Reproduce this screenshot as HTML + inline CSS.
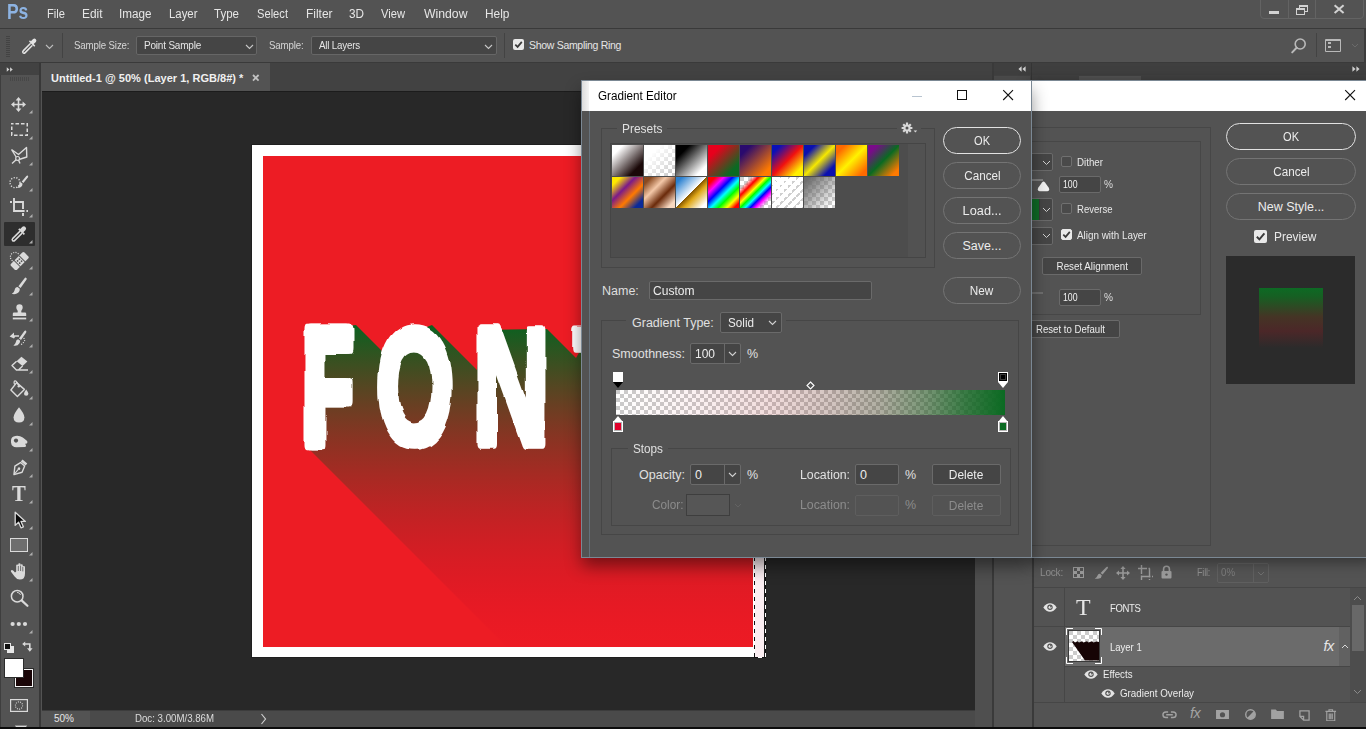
<!DOCTYPE html>
<html lang="en">
<head>
<meta charset="utf-8">
<title>Photoshop - Gradient Editor</title>
<style>
*{box-sizing:border-box;margin:0;padding:0}
html,body{width:1366px;height:729px;overflow:hidden;background:#535353}
body{font-family:"Liberation Sans","DejaVu Sans",sans-serif;font-size:12px;color:#dcdcdc;position:relative}
.abs,#app div,#app span,#app svg{position:absolute}
#app{position:absolute;left:0;top:0;width:1366px;height:729px;overflow:hidden;background:#535353}
.t{white-space:nowrap;line-height:1;transform-origin:0 0}
#app .c{position:static;display:inline-block;transform-origin:50% 50%;line-height:inherit}
/* ---------- menu ---------- */
#menubar{left:0;top:0;width:1366px;height:28px;background:#535353}
#menubar .t{top:8px;font-size:12.5px;color:#e6e6e6}
#optbar{left:0;top:28px;width:1366px;height:35px;background:#535353;border-top:1px solid #3a3a3a;border-bottom:1px solid #3a3a3a}
.sel{background:#454545;border:1px solid #666;border-radius:2px}
/* ---------- chrome ---------- */
#tabrow{left:41px;top:63px;width:951px;height:28px;background:#424242}
#tab{left:0;top:0;width:229px;height:28px;background:#535353}
#canvas{left:42px;top:91px;width:933px;height:619px;background:#282828;overflow:hidden}
#toolbar{left:0;top:63px;width:41px;height:666px;background:#535353}
#status{left:42px;top:710px;width:933px;height:18px;background:#535353}
/* ---------- dialog ---------- */
#ge{left:581px;top:80px;width:451px;height:478px;background:#535353;border:1px solid #7b8894;box-shadow:0 9px 16px -1px rgba(0,0,0,.46)}
.btn{border:1px solid #747474;border-radius:14px;height:27px;text-align:center;color:#ececec;font-size:12.5px;line-height:27px}
.grp{border:1px solid #464646}
.lbl{background:#535353;padding:0 4px;font-size:13.5px;color:#e0e0e0;line-height:14px;height:14px}
.cb{width:11px;height:11px;border:1px solid #707070;border-radius:2px;background:#4a4a4a}
.cb.on{background:#e9e9e9;border-color:#e9e9e9}
.sw{width:31px;height:31px}
.inp{background:#454545;border:1px solid #6a6a6a;border-radius:2px;color:#e6e6e6;font-size:12.5px}
</style>
</head>
<body>
<div id="app">

<!-- MENU BAR -->
<div id="menubar">
  <span class="t" style="left:7px;top:1.5px;font-size:21.5px;font-weight:bold;color:#8db3e2;letter-spacing:-0.3px;transform:scaleX(0.813)">Ps</span>
  <span class="t" style="left:47px;transform:scaleX(0.893)">File</span>
  <span class="t" style="left:82px;transform:scaleX(0.951)">Edit</span>
  <span class="t" style="left:119px;transform:scaleX(0.935)">Image</span>
  <span class="t" style="left:169px;transform:scaleX(0.911)">Layer</span>
  <span class="t" style="left:214px;transform:scaleX(0.922)">Type</span>
  <span class="t" style="left:257px;transform:scaleX(0.892)">Select</span>
  <span class="t" style="left:306px;transform:scaleX(0.954)">Filter</span>
  <span class="t" style="left:349px;transform:scaleX(0.938)">3D</span>
  <span class="t" style="left:381px;transform:scaleX(0.893)">View</span>
  <span class="t" style="left:424px;transform:scaleX(0.978)">Window</span>
  <span class="t" style="left:485px;transform:scaleX(0.953)">Help</span>
  <div style="left:1260px;top:-1px;width:104px;height:20px;border:1px solid #636363;border-radius:0 0 4px 4px"></div>
  <div style="left:1288px;top:0;width:1px;height:18px;background:#636363"></div>
  <div style="left:1315px;top:0;width:1px;height:18px;background:#636363"></div>
  <div style="left:1269px;top:10.5px;width:10px;height:3.5px;background:#d2d2d2"></div>
  <div style="left:1299px;top:5px;width:9px;height:7px;border:1.5px solid #d2d2d2;border-top-width:2px"></div>
  <div style="left:1296px;top:8px;width:9px;height:7px;border:1.5px solid #d2d2d2;border-top-width:2px;background:#535353"></div>
  <svg style="left:1333px;top:4px" width="13" height="11" viewBox="0 0 13 11"><path d="M1.6 1.2 L10.6 9 M10.6 1.2 L1.6 9" stroke="#d2d2d2" stroke-width="2"/></svg>
</div>

<!-- OPTIONS BAR -->
<div id="optbar">
  <div style="left:6px;top:7px;width:4px;height:21px;background:repeating-linear-gradient(to bottom,#434343 0 1px,transparent 1px 2px)"></div>
  <svg style="left:20px;top:8px" width="18" height="19" viewBox="0 0 18 19"><g fill="none" stroke="#e4e4e4" stroke-width="1.5" stroke-linecap="round" stroke-linejoin="round"><path d="M10.2 6.8 L3.4 13.6 Q2.2 14.8 3 15.8 Q4 16.8 5.2 15.6 L12 8.8"/></g><path d="M9 4.6 L14.2 9.8 L15.3 8.7 L13.7 7.1 L15.9 4.9 Q17 3.4 15.8 2.2 Q14.6 1 13.1 2.1 L10.9 4.3 L9.9 3.3 Z" fill="#e4e4e4"/></svg>
  <svg style="left:45px;top:15px" width="9" height="6" viewBox="0 0 9 6"><path d="M1 1 L4.5 4.5 L8 1" fill="none" stroke="#bdbdbd" stroke-width="1.1"/></svg>
  <div style="left:62px;top:4px;width:1px;height:25px;background:#434343"></div>
  <span class="t" style="left:74px;top:11px;font-size:10.5px;color:#d6d6d6;letter-spacing:-0.15px;transform:scaleX(0.922)">Sample Size:</span>
  <div class="sel" style="left:136px;top:7px;width:121px;height:19px"></div>
  <span class="t" style="left:144px;top:11px;font-size:10.5px;color:#e6e6e6;letter-spacing:-0.2px;transform:scaleX(0.951)">Point Sample</span>
  <svg style="left:245px;top:15px" width="9" height="6" viewBox="0 0 9 6"><path d="M1 1 L4.5 4.5 L8 1" fill="none" stroke="#c8c8c8" stroke-width="1.1"/></svg>
  <span class="t" style="left:269px;top:11px;font-size:10.5px;color:#d6d6d6;letter-spacing:-0.15px;transform:scaleX(0.920)">Sample:</span>
  <div class="sel" style="left:311px;top:7px;width:186px;height:19px"></div>
  <span class="t" style="left:319px;top:11px;font-size:10.5px;color:#e6e6e6;letter-spacing:-0.2px;transform:scaleX(0.930)">All Layers</span>
  <svg style="left:484px;top:15px" width="9" height="6" viewBox="0 0 9 6"><path d="M1 1 L4.5 4.5 L8 1" fill="none" stroke="#c8c8c8" stroke-width="1.1"/></svg>
  <div style="left:504px;top:4px;width:1px;height:25px;background:#434343"></div>
  <div style="left:513px;top:10px;width:11px;height:11px;background:#e9e9e9;border-radius:2px"></div>
  <svg style="left:513px;top:10px" width="11" height="11" viewBox="0 0 11 11"><path d="M2.3 5.6 L4.6 7.9 L8.8 2.9" fill="none" stroke="#3a3a3a" stroke-width="1.7"/></svg>
  <span class="t" style="left:529px;top:11px;font-size:10.5px;color:#e6e6e6;letter-spacing:-0.3px">Show Sampling Ring</span>
  <svg style="left:1290px;top:8px" width="18" height="18" viewBox="0 0 18 18"><circle cx="10.2" cy="7" r="5" fill="none" stroke="#b9b9b9" stroke-width="1.6"/><path d="M6.6 10.8 L2.2 15.4" stroke="#b9b9b9" stroke-width="2" stroke-linecap="round"/></svg>
  <div style="left:1316px;top:4px;width:1px;height:24px;background:#434343"></div>
  <div style="left:1325px;top:10px;width:16px;height:13px;border:1.5px solid #b9b9b9;border-top-width:2px;border-radius:1px"></div>
  <div style="left:1328px;top:13px;width:3px;height:2px;background:#b9b9b9"></div>
  <div style="left:1328px;top:17px;width:3px;height:2px;background:#b9b9b9"></div>
  <svg style="left:1351px;top:14px" width="8" height="5" viewBox="0 0 8 5"><path d="M1 1 L4 4 L7 1" fill="none" stroke="#6a6a6a" stroke-width="1"/></svg>
</div>

<!-- TAB ROW / CANVAS -->
<div id="tabrow">
  <div id="tab"></div>
  <span class="t" style="left:10px;top:10px;font-size:11px;font-weight:bold;color:#f0f0f0;letter-spacing:0.02px">Untitled-1 @ 50% (Layer 1, RGB/8#) *</span>
  <svg style="left:211px;top:10.5px" width="8" height="8" viewBox="0 0 8 8"><path d="M1 1 L6.6 6.6 M6.6 1 L1 6.6" stroke="#c2c2c2" stroke-width="1.8"/></svg>
</div>
<div id="canvas">
  <!-- document (coords relative to canvas: subtract 42,91) -->
  <div id="doc" style="left:210px;top:54px;width:512px;height:512px;background:#fff;box-shadow:0 0 0 1px #1f1f1f"></div>
  <div id="art" style="left:221px;top:65px;width:490px;height:491px;background:#ed1c24;overflow:hidden">
    <svg style="left:0;top:0" width="490" height="491" viewBox="263 156 490 491">
      <defs>
        <linearGradient id="lsg" gradientUnits="userSpaceOnUse" x1="0" y1="323" x2="0" y2="662">
      <stop offset="0.000" stop-color="rgb(8,98,32)" stop-opacity="1.000"/>
      <stop offset="0.083" stop-color="rgb(27,90,32)" stop-opacity="0.917"/>
      <stop offset="0.167" stop-color="rgb(45,82,33)" stop-opacity="0.833"/>
      <stop offset="0.250" stop-color="rgb(64,74,34)" stop-opacity="0.750"/>
      <stop offset="0.333" stop-color="rgb(83,65,34)" stop-opacity="0.667"/>
      <stop offset="0.417" stop-color="rgb(101,57,34)" stop-opacity="0.583"/>
      <stop offset="0.500" stop-color="rgb(120,49,35)" stop-opacity="0.500"/>
      <stop offset="0.583" stop-color="rgb(139,41,36)" stop-opacity="0.417"/>
      <stop offset="0.667" stop-color="rgb(157,33,36)" stop-opacity="0.333"/>
      <stop offset="0.750" stop-color="rgb(176,24,36)" stop-opacity="0.250"/>
      <stop offset="0.833" stop-color="rgb(195,16,37)" stop-opacity="0.167"/>
      <stop offset="0.917" stop-color="rgb(213,8,38)" stop-opacity="0.083"/>
      <stop offset="1.000" stop-color="rgb(232,0,38)" stop-opacity="0.000"/>
        </linearGradient>
        <filter id="rough" x="-5%" y="-5%" width="110%" height="110%">
          <feTurbulence type="fractalNoise" baseFrequency="0.035" numOctaves="2" seed="7" result="n"/>
          <feDisplacementMap in="SourceGraphic" in2="n" scale="6" xChannelSelector="R" yChannelSelector="G"/>
        </filter>
      </defs>
      <polygon fill="url(#lsg)" points="309,330 356,325 385,354 398,338 432,325 477,370 480,330 547,329 576,358 592,330 753,330 753,670 530,670 309,449"/>
      <g filter="url(#rough)" font-family="Liberation Sans, sans-serif" font-weight="bold" font-size="100" fill="#fff" stroke="#fff" stroke-width="8" stroke-linejoin="round">
        <text transform="translate(301.7,443.6) scale(0.772,1.672)" vector-effect="non-scaling-stroke">F</text><text transform="translate(304.2,443.6) scale(0.772,1.672)" vector-effect="non-scaling-stroke">F</text><text transform="translate(306.7,443.6) scale(0.772,1.672)" vector-effect="non-scaling-stroke">F</text>
        <text transform="translate(377,443.4) scale(0.976,1.632)" vector-effect="non-scaling-stroke">O</text>
        <text transform="translate(473.6,444) scale(1.052,1.672)" vector-effect="non-scaling-stroke">N</text>
        <text transform="translate(574,444) scale(1.0,1.672)" vector-effect="non-scaling-stroke">T</text>
        <text transform="translate(648,443.2) scale(1.0,1.662)" vector-effect="non-scaling-stroke">S</text>
      </g>
    </svg>
  </div>
  <!-- marching ants -->
  <div style="left:712px;top:466px;width:10px;height:100px;background:#fbeef2"></div>
  <div style="left:712px;top:466px;width:1px;height:101px;background:repeating-linear-gradient(to bottom,#111 0 4px,#fff 4px 8px)"></div>
  <div style="left:723px;top:466px;width:1px;height:101px;background:repeating-linear-gradient(to bottom,#fff 0 4px,#111 4px 8px)"></div>
  <div style="left:712px;top:566px;width:12px;height:1px;background:repeating-linear-gradient(to right,#111 0 4px,#fff 4px 8px)"></div>
</div>
<div style="left:42px;top:91px;width:933px;height:1px;background:#1c1c1c"></div>
<div style="left:975px;top:91px;width:17px;height:637px;background:#4f4f4f"></div>
<div id="status">
  <div style="left:0;top:0;width:48px;height:18px;background:#535353"></div>
  <div style="left:48px;top:0;width:885px;height:18px;background:#4a4a4a"></div>
  <div style="left:0;top:0;width:933px;height:1px;background:#3c3c3c"></div>
  <span class="t" style="left:12px;top:4px;font-size:10px;color:#e6e6e6">50%</span>
  <span class="t" style="left:93px;top:4px;font-size:10px;color:#dcdcdc;transform:scaleX(0.967)">Doc: 3.00M/3.86M</span>
  <svg style="left:218px;top:3px" width="7" height="12" viewBox="0 0 7 12"><path d="M1.5 1 L5.5 6 L1.5 11" fill="none" stroke="#cfcfcf" stroke-width="1.2"/></svg>
</div>
<div id="toolbar">
</div>
<div id="tools" style="left:0;top:0;width:0;height:0">
  <div style="left:0;top:63px;width:39px;height:12px;background:#424242"></div>
  <div style="left:0;top:75px;width:1px;height:654px;background:#3e3e3e"></div>
  <div style="left:39px;top:63px;width:2px;height:666px;background:#383838"></div>
  <svg style="left:5.5px;top:66.5px" width="7.5" height="5" viewBox="0 0 8 6"><path d="M0.4 0.3 V5.7 L3.6 3Z M4.4 0.3 V5.7 L7.6 3Z" fill="#d0d0d0"/></svg>
  <div style="left:10px;top:77px;width:20px;height:4px;background:repeating-linear-gradient(to right,#474747 0 1px,transparent 1px 2px)"></div>
    <svg style="left:11px;top:97px" width="15" height="15" viewBox="0 0 15 15"><path d="M7.5 0 L10.4 3.4 H8.3 V6.7 H11.6 V4.6 L15 7.5 L11.6 10.4 V8.3 H8.3 V11.6 H10.4 L7.5 15 L4.6 11.6 H6.7 V8.3 H3.4 V10.4 L0 7.5 L3.4 4.6 V6.7 H6.7 V3.4 H4.6Z" fill="#dadada"/></svg>
  <svg style="left:11px;top:123px" width="17" height="13" viewBox="0 0 17 13"><rect x="0.75" y="0.75" width="15.5" height="11.5" fill="none" stroke="#dadada" stroke-width="1.5" stroke-dasharray="3.6 1.9" stroke-dashoffset="1.8"/></svg>
  <svg style="left:10px;top:146px" width="19" height="19" viewBox="0 0 19 19"><path d="M1.5 3.5 L8.5 8.5 L16.5 1.5 L16.8 11 L9 13.5 M6.5 11.5 L1.5 3.5 M7.5 12.5 L2 17.5 M8 13 L10 17.5" fill="none" stroke="#dadada" stroke-width="1.4" stroke-linejoin="round"/><circle cx="7.6" cy="12.4" r="1.9" fill="#535353" stroke="#dadada" stroke-width="1.2"/></svg>
  <svg style="left:9px;top:175px" width="20" height="15" viewBox="0 0 20 15"><circle cx="6" cy="7.6" r="5" fill="none" stroke="#dadada" stroke-width="1.4" stroke-dasharray="1.2 1.5"/><path d="M18.6 0.6 Q19.6 1.2 19 2.2 L14.4 8 L12.8 6.6 L17.4 1 Q18 0.3 18.6 0.6Z M12 7.4 L13.6 8.8 Q13.6 11.6 11.2 12.4 Q9.4 13 7.8 12.6 Q9.6 11.6 10 10 Q10.4 7.6 12 7.4Z" fill="#dadada"/></svg>
  <svg style="left:9px;top:198px" width="19" height="18" viewBox="0 0 19 18"><path d="M5 0 V13 H15.6 M1 4 H3 M5 4 H14 V11 M14 15 V18 M17.4 13 H19" fill="none" stroke="#dadada" stroke-width="1.9"/></svg>
  <div style="left:4px;top:222px;width:31px;height:24px;background:#2e2e2e;border-radius:1px"></div>
  <svg style="left:10px;top:225px" width="18" height="18" viewBox="0 0 18 18"><g fill="none" stroke="#dadada" stroke-width="1.5" stroke-linecap="round" stroke-linejoin="round"><path d="M9.6 6.6 L2.8 13.4 Q1.6 14.6 2.6 15.6 Q3.6 16.6 4.8 15.4 L11.6 8.6"/></g><path d="M8.2 4.4 L13.8 10 L15 8.8 L13.4 7.2 L15.6 5 Q16.8 3.4 15.4 2 Q14 0.6 12.4 1.8 L10.2 4 L9.4 3.2 Z" fill="#dadada"/></svg>
  <svg style="left:9px;top:251px" width="20" height="19" viewBox="0 0 20 19"><circle cx="6" cy="6" r="4.6" fill="none" stroke="#dadada" stroke-width="1.2" stroke-dasharray="1.1 1.3"/><g transform="rotate(-45 10.5 10)"><rect x="1" y="6" width="19" height="8.4" rx="1.6" fill="#dadada"/><rect x="6.6" y="5.4" width="0.9" height="9.6" fill="#535353"/><rect x="13.5" y="5.4" width="0.9" height="9.6" fill="#535353"/><circle cx="9.2" cy="8.6" r="0.9" fill="#535353"/><circle cx="11.8" cy="8.6" r="0.9" fill="#535353"/><circle cx="9.2" cy="11.6" r="0.9" fill="#535353"/><circle cx="11.8" cy="11.6" r="0.9" fill="#535353"/></g></svg>
  <svg style="left:11px;top:277px" width="17" height="18" viewBox="0 0 17 18"><path d="M15 0.7 Q16.2 1.2 15.6 2.6 L9.6 11 L7.4 9.2 L13.6 1.2 Q14.2 0.4 15 0.7Z M6.6 10 L8.8 11.8 Q8.8 15.4 5.8 16.6 Q3.2 17.6 0.8 16.8 Q3.2 15.4 3.6 13.2 Q4.2 10 6.6 10Z" fill="#dadada"/></svg>
  <svg style="left:12px;top:304px" width="15" height="17" viewBox="0 0 15 17"><path d="M7.5 0.2 Q10.7 0.2 10.7 3.4 Q10.7 5 9.6 6.2 Q9 7.2 9.4 8.6 H13 Q14.2 8.6 14.2 9.8 V12 H0.8 V9.8 Q0.8 8.6 2 8.6 H5.6 Q6 7.2 5.4 6.2 Q4.3 5 4.3 3.4 Q4.3 0.2 7.5 0.2Z" fill="#dadada"/><rect x="0.8" y="13.6" width="13.4" height="1.8" fill="#dadada"/></svg>
  <svg style="left:9px;top:330px" width="20" height="17" viewBox="0 0 20 17"><path d="M16.6 0.6 Q17.8 1.1 17.2 2.4 L12 10 L10 8.4 L15.4 1 Q15.9 0.3 16.6 0.6Z M9.2 9.2 L11.2 10.8 Q11.2 14 8.6 15.2 Q6.4 16 4.4 15.4 Q6.4 14.2 6.8 12.2 Q7.2 9.4 9.2 9.2Z" fill="#dadada"/><path d="M0.6 6.6 L5 2.6 V5.2 H10 V6.8 H6.2 L5 8.4Z" fill="#dadada"/><g fill="#dadada"><circle cx="15" cy="8.4" r="0.7"/><circle cx="15.6" cy="10.6" r="0.7"/><circle cx="14.4" cy="12.6" r="0.7"/><circle cx="12.6" cy="14.2" r="0.7"/></g></svg>
  <svg style="left:11px;top:356px" width="18" height="16" viewBox="0 0 18 16"><path d="M10.4 0.8 L16.4 5.6 L11.6 10 L5.6 5.2Z" fill="#dadada"/><path d="M5.6 5.2 L1 9.6 L5.4 14 H17 M11.6 10 L7.4 14" fill="none" stroke="#dadada" stroke-width="1.4" stroke-linejoin="round"/></svg>
  <svg style="left:10px;top:380px" width="19" height="18" viewBox="0 0 19 18"><path d="M6.6 2.6 L14.4 9.4 L7.4 16.6 L0.9 10 Z" fill="none" stroke="#dadada" stroke-width="1.4" stroke-linejoin="round"/><path d="M4.6 4.6 Q3.4 1.2 5 0.8 Q6.6 0.6 8.6 5.4" fill="none" stroke="#dadada" stroke-width="1.2"/><circle cx="8.8" cy="6.2" r="1.2" fill="#dadada"/><path d="M16.2 9.6 Q18.4 12.6 18.4 13.8 Q18.4 15.8 16.2 15.8 Q14 15.8 14 13.8 Q14 12.6 16.2 9.6Z" fill="#dadada"/></svg>
  <svg style="left:13px;top:407px" width="12" height="16" viewBox="0 0 12 16"><path d="M6 0.3 Q11.4 7 11.4 10.2 Q11.4 15.6 6 15.6 Q0.6 15.6 0.6 10.2 Q0.6 7 6 0.3Z" fill="#dadada"/></svg>
  <svg style="left:10px;top:435px" width="19" height="14" viewBox="0 0 19 14"><path d="M1 5.2 Q1.4 1.6 5.4 1 Q9.6 0.4 12.8 2.6 L16.6 5.6 Q18 6.8 17.2 8 Q16.4 9 15 8.4 L16 10.4 Q16.2 12 14.6 12 L6.4 12.2 Q1.6 12.2 1 7.4Z" fill="#dadada"/><circle cx="6" cy="5.6" r="2.1" fill="#535353"/></svg>
  <svg style="left:11px;top:459px" width="17" height="18" viewBox="0 0 17 18"><g transform="rotate(40 8.5 9)"><path d="M5.4 0.6 H11.6 V3.2 H5.4Z" fill="#dadada"/><path d="M5.8 4.2 H11.2 L13.2 10.6 L8.5 17.6 L3.8 10.6Z" fill="none" stroke="#dadada" stroke-width="1.4" stroke-linejoin="round"/><path d="M8.5 17 V10.6" stroke="#dadada" stroke-width="1.1"/><circle cx="8.5" cy="9.8" r="1.3" fill="#dadada"/></g></svg>
  <span class="t" style="left:12px;top:482px;font-size:23px;font-family:'Liberation Serif',serif;font-weight:bold;color:#dadada;transform-origin:0 0;transform:scaleX(0.899)">T</span>
  <svg style="left:14px;top:511px" width="13" height="18" viewBox="0 0 13 18"><path d="M1.2 1.2 V14.4 L4.6 11.2 L7 16.8 L9.4 15.8 L7 10.4 H11.4Z" fill="#0a0a0a" stroke="#dadada" stroke-width="1.3" stroke-linejoin="round"/></svg>
  <div style="left:10px;top:538px;width:18px;height:14px;background:#6e6e6e;border:1.5px solid #dadada"></div>
  <svg style="left:10px;top:563px" width="19" height="17" viewBox="0 0 19 17"><path d="M6.2 8.6 V2.6 Q6.2 1.4 7.2 1.4 Q8.2 1.4 8.2 2.6 V1.4 Q8.2 0.2 9.4 0.2 Q10.6 0.2 10.6 1.4 V2.4 Q10.6 1.2 11.7 1.2 Q12.8 1.2 12.8 2.4 V4.2 Q12.8 3 13.9 3 Q15 3 15 4.2 V10.4 Q15 16.6 9.8 16.6 Q6.6 16.6 4.6 13.6 L1 8.8 Q0.4 7.6 1.4 7.2 Q2.4 6.8 3.4 7.8 L5 9.6Z" fill="#dadada"/><path d="M8.3 3 V8 M10.6 2.6 V8 M12.8 4 V8.4" stroke="#535353" stroke-width="0.8"/></svg>
  <svg style="left:10px;top:589px" width="19" height="18" viewBox="0 0 19 18"><circle cx="7.2" cy="7.2" r="5.8" fill="none" stroke="#dadada" stroke-width="1.5"/><path d="M11.6 11.4 L17.4 16.8" stroke="#dadada" stroke-width="2.2" stroke-linecap="round"/><path d="M7 3.4 Q9.8 3.4 10.6 6" fill="none" stroke="#dadada" stroke-width="0.9"/></svg>
  <svg style="left:10px;top:621px" width="18" height="6" viewBox="0 0 18 6"><circle cx="2.6" cy="3" r="2.1" fill="#dadada"/><circle cx="8.8" cy="3" r="2.1" fill="#dadada"/><circle cx="15" cy="3" r="2.1" fill="#dadada"/></svg>
  <div style="left:7px;top:646px;width:7px;height:7px;background:#e6e6e6"></div><div style="left:4px;top:643px;width:7px;height:7px;background:#111;border:1px solid #e6e6e6"></div>
  <svg style="left:22px;top:641px" width="11" height="12" viewBox="0 0 11 12"><path d="M3.2 0.4 V2.2 H8.6 V7.2 H10.6 L7.8 10.8 L5 7.2 H7 V3.8 H3.2 V5.6 L0.2 3Z" fill="#dadada"/></svg>
  <div style="left:15px;top:669px;width:18px;height:18px;background:#190507;border:1px solid #f4f4f4;box-shadow:0 0 0 1px #2c2c2c"></div>
  <div style="left:5px;top:659px;width:18px;height:18px;background:#fff;box-shadow:0 0 0 1px #2c2c2c"></div>
  <svg style="left:10px;top:699px" width="18" height="13" viewBox="0 0 18 13"><rect x="0.6" y="0.6" width="16.8" height="11.8" fill="none" stroke="#dadada" stroke-width="1.2"/><circle cx="9" cy="6.5" r="3.6" fill="none" stroke="#dadada" stroke-width="1.1" stroke-dasharray="1 1.2"/></svg>
  <div style="left:15px;top:725px;width:12px;height:4px;background:#dadada;border:1px solid #888"></div>
  <svg style="left:29px;top:110px" width="3.5" height="3.5" viewBox="0 0 4 4"><path d="M4 0 V4 H0Z" fill="#adadad"/></svg><svg style="left:29px;top:136px" width="3.5" height="3.5" viewBox="0 0 4 4"><path d="M4 0 V4 H0Z" fill="#adadad"/></svg><svg style="left:29px;top:162px" width="3.5" height="3.5" viewBox="0 0 4 4"><path d="M4 0 V4 H0Z" fill="#adadad"/></svg><svg style="left:29px;top:188px" width="3.5" height="3.5" viewBox="0 0 4 4"><path d="M4 0 V4 H0Z" fill="#adadad"/></svg><svg style="left:29px;top:214px" width="3.5" height="3.5" viewBox="0 0 4 4"><path d="M4 0 V4 H0Z" fill="#adadad"/></svg><svg style="left:29px;top:240px" width="3.5" height="3.5" viewBox="0 0 4 4"><path d="M4 0 V4 H0Z" fill="#adadad"/></svg><svg style="left:29px;top:266px" width="3.5" height="3.5" viewBox="0 0 4 4"><path d="M4 0 V4 H0Z" fill="#adadad"/></svg><svg style="left:29px;top:292px" width="3.5" height="3.5" viewBox="0 0 4 4"><path d="M4 0 V4 H0Z" fill="#adadad"/></svg><svg style="left:29px;top:318px" width="3.5" height="3.5" viewBox="0 0 4 4"><path d="M4 0 V4 H0Z" fill="#adadad"/></svg><svg style="left:29px;top:344px" width="3.5" height="3.5" viewBox="0 0 4 4"><path d="M4 0 V4 H0Z" fill="#adadad"/></svg><svg style="left:29px;top:370px" width="3.5" height="3.5" viewBox="0 0 4 4"><path d="M4 0 V4 H0Z" fill="#adadad"/></svg><svg style="left:29px;top:396px" width="3.5" height="3.5" viewBox="0 0 4 4"><path d="M4 0 V4 H0Z" fill="#adadad"/></svg><svg style="left:29px;top:422px" width="3.5" height="3.5" viewBox="0 0 4 4"><path d="M4 0 V4 H0Z" fill="#adadad"/></svg><svg style="left:29px;top:448px" width="3.5" height="3.5" viewBox="0 0 4 4"><path d="M4 0 V4 H0Z" fill="#adadad"/></svg><svg style="left:29px;top:474px" width="3.5" height="3.5" viewBox="0 0 4 4"><path d="M4 0 V4 H0Z" fill="#adadad"/></svg><svg style="left:29px;top:500px" width="3.5" height="3.5" viewBox="0 0 4 4"><path d="M4 0 V4 H0Z" fill="#adadad"/></svg><svg style="left:29px;top:526px" width="3.5" height="3.5" viewBox="0 0 4 4"><path d="M4 0 V4 H0Z" fill="#adadad"/></svg><svg style="left:29px;top:552px" width="3.5" height="3.5" viewBox="0 0 4 4"><path d="M4 0 V4 H0Z" fill="#adadad"/></svg><svg style="left:29px;top:578px" width="3.5" height="3.5" viewBox="0 0 4 4"><path d="M4 0 V4 H0Z" fill="#adadad"/></svg><svg style="left:29px;top:630px" width="3.5" height="3.5" viewBox="0 0 4 4"><path d="M4 0 V4 H0Z" fill="#adadad"/></svg>
</div>

<div style="left:1364px;top:29px;width:2px;height:52px;background:#3c3c3c"></div>
<!-- RIGHT PANELS -->
<div id="panels" style="left:0;top:0;width:0;height:0">
  <!-- panel dock header -->
  <div style="left:992px;top:63px;width:374px;height:12px;background:#3f3f3f"></div>
  <div style="left:992px;top:75px;width:374px;height:6px;background:#424242"></div>
  <div style="left:993px;top:76px;width:37px;height:5px;background:#4b4b4b"></div>
  <div style="left:1079px;top:76px;width:62px;height:5px;background:#535353"></div>
  <div style="left:1031px;top:63px;width:1px;height:18px;background:#353535"></div>
  <svg style="left:1018px;top:66px" width="8" height="6" viewBox="0 0 8 6"><path d="M3.6 0.3 V5.7 L0.4 3Z M7.6 0.3 V5.7 L4.4 3Z" fill="#d0d0d0"/></svg>
  <svg style="left:1352px;top:66px" width="8" height="6" viewBox="0 0 8 6"><path d="M0.4 0.3 V5.7 L3.6 3Z M4.4 0.3 V5.7 L7.6 3Z" fill="#d0d0d0"/></svg>
  <!-- left narrow dock column -->
  <div style="left:992px;top:81px;width:40px;height:648px;background:#535353"></div>
  <div style="left:992px;top:63px;width:2px;height:666px;background:#3a3a3a"></div>
  <div style="left:1032px;top:558px;width:2px;height:171px;background:#3a3a3a"></div>
  <!-- layers panel -->
  <div style="left:1034px;top:558px;width:332px;height:171px;background:#535353"></div>
  <div style="left:1034px;top:587px;width:332px;height:1px;background:#464646"></div>
  <span class="t" style="left:1040px;top:567px;font-size:10.5px;color:#8e8e8e;letter-spacing:-0.2px;transform:scaleX(0.954)">Lock:</span>
  <div style="left:1073px;top:567px;width:11px;height:11px;border:1px solid #9a9a9a;background:repeating-conic-gradient(#9a9a9a 0 25%,#535353 0 50%) 0 0/6px 6px"></div>
  <svg style="left:1094px;top:566px" width="15" height="14" viewBox="0 0 15 14"><path d="M13.6 0.8 Q14.4 1.2 13.8 2.2 L8.6 8.6 L6.6 7 L12.4 1 Q13 0.5 13.6 0.8Z M6 7.8 L7.8 9.4 Q7.6 12 5 12.6 Q2.6 13.2 0.8 12.4 Q3 11.6 3.4 9.8 Q4 7.6 6 7.8Z" fill="#9a9a9a"/></svg>
  <svg style="left:1116px;top:566px" width="14" height="14" viewBox="0 0 14 14"><path d="M7 0 L9.6 3 H7.8 V6.2 H11 V4.4 L14 7 L11 9.6 V7.8 H7.8 V11 H9.6 L7 14 L4.4 11 H6.2 V7.8 H3 V9.6 L0 7 L3 4.4 V6.2 H6.2 V3 H4.4Z" fill="#9a9a9a"/></svg>
  <svg style="left:1138px;top:565px" width="15" height="15" viewBox="0 0 15 15"><path d="M3.5 0 V15 M0 3.5 H12 M11.5 3.5 V15 M3.5 11.5 H15" stroke="#9a9a9a" stroke-width="1.4" fill="none" stroke-dasharray="9 1.5 30"/></svg>
  <svg style="left:1161px;top:565px" width="11" height="14" viewBox="0 0 11 14"><path d="M2.6 6 V4 Q2.6 1.2 5.5 1.2 Q8.4 1.2 8.4 4 V6" fill="none" stroke="#9a9a9a" stroke-width="1.6"/><rect x="0.5" y="6" width="10" height="7.5" rx="1" fill="#9a9a9a"/><circle cx="5.5" cy="9.6" r="1.2" fill="#535353"/></svg>
  <span class="t" style="left:1197px;top:567px;font-size:10.5px;color:#8e8e8e;letter-spacing:-0.2px;transform:scaleX(0.860)">Fill:</span>
  <div style="left:1217px;top:563px;width:52px;height:20px;border:1px solid #5f5f5f;border-radius:2px"></div>
  <div style="left:1253px;top:564px;width:1px;height:18px;background:#5f5f5f"></div>
  <span class="t" style="left:1221px;top:567px;font-size:10.5px;color:#7c7c7c;transform:scaleX(0.922)">0%</span>
  <svg style="left:1257px;top:571px" width="8" height="5" viewBox="0 0 8 5"><path d="M1 1 L4 4 L7 1" fill="none" stroke="#6e6e6e" stroke-width="1"/></svg>
  <!-- layer rows -->
  <div style="left:1064px;top:588px;width:1px;height:114px;background:#464646"></div>
  <div style="left:1034px;top:626px;width:316px;height:1px;background:#464646"></div>
  <div style="left:1065px;top:627px;width:274px;height:39px;background:#6b6b6b"></div>
  <div style="left:1339px;top:627px;width:11px;height:39px;background:#616161"></div>
  <div style="left:1065px;top:666px;width:285px;height:1px;background:#464646"></div>
  <svg style="left:1043px;top:603px" width="14" height="9" viewBox="0 0 14 9"><path d="M0.3 4.5 Q3.2 0.3 7 0.3 Q10.8 0.3 13.7 4.5 Q10.8 8.7 7 8.7 Q3.2 8.7 0.3 4.5Z" fill="#e4e4e4"/><circle cx="7" cy="4.3" r="2.7" fill="#535353"/><circle cx="7" cy="4.3" r="1.5" fill="#e4e4e4"/><circle cx="7.7" cy="3.7" r="0.7" fill="#535353"/></svg>
  <svg style="left:1043px;top:642px" width="14" height="9" viewBox="0 0 14 9"><path d="M0.3 4.5 Q3.2 0.3 7 0.3 Q10.8 0.3 13.7 4.5 Q10.8 8.7 7 8.7 Q3.2 8.7 0.3 4.5Z" fill="#e4e4e4"/><circle cx="7" cy="4.3" r="2.7" fill="#535353"/><circle cx="7" cy="4.3" r="1.5" fill="#e4e4e4"/><circle cx="7.7" cy="3.7" r="0.7" fill="#535353"/></svg>
  <span class="t" style="left:1076px;top:596px;font-size:23px;font-family:'Liberation Serif',serif;color:#e6e6e6;transform:scaleX(1.038)">T</span>
  <span class="t" style="left:1110px;top:603px;font-size:10.5px;color:#ececec;letter-spacing:-0.4px;transform:scaleX(0.908)">FONTS</span>
  <div style="left:1069px;top:631px;width:30px;height:30px;background:repeating-conic-gradient(#fff 0 25%,#cccccc 0 50%) 0 0/8px 8px"></div>
  <svg style="left:1066px;top:628px" width="36" height="36" viewBox="0 0 36 36"><path d="M6 14 L7.5 13 L9 14.5 L11.5 13.2 L13 14.6 L16 13.2 L17.5 14.6 L21 13.2 L22.5 14.6 L26 13.2 L27.5 14.4 L30.5 13.4 L33 14 V32.5 H19 Z" fill="#160405"/><path d="M0.5 7 V0.5 H7 M29 0.5 H35.5 V7 M35.5 29 V35.5 H29 M7 35.5 H0.5 V29" fill="none" stroke="#fff" stroke-width="1"/><rect x="2.5" y="2.5" width="31" height="31" fill="none" stroke="#3a3a3a" stroke-width="1"/></svg>
  <span class="t" style="left:1110px;top:642px;font-size:10.5px;color:#f0f0f0;transform:scaleX(0.905)">Layer 1</span>
  <span class="t" style="left:1323.5px;top:639px;font-size:14.5px;font-style:italic;color:#e6e6e6;letter-spacing:-0.6px">fx</span>
  <svg style="left:1341px;top:644px" width="8" height="5" viewBox="0 0 8 5"><path d="M1 4 L4 1 L7 4" fill="none" stroke="#d8d8d8" stroke-width="1"/></svg>
  <svg style="left:1084px;top:670px" width="14" height="9" viewBox="0 0 14 9"><path d="M0.3 4.5 Q3.2 0.3 7 0.3 Q10.8 0.3 13.7 4.5 Q10.8 8.7 7 8.7 Q3.2 8.7 0.3 4.5Z" fill="#e4e4e4"/><circle cx="7" cy="4.3" r="2.7" fill="#535353"/><circle cx="7" cy="4.3" r="1.5" fill="#e4e4e4"/><circle cx="7.7" cy="3.7" r="0.7" fill="#535353"/></svg>
  <span class="t" style="left:1103px;top:669px;font-size:10.5px;color:#ececec;transform:scaleX(0.925)">Effects</span>
  <svg style="left:1101px;top:689px" width="14" height="9" viewBox="0 0 14 9"><path d="M0.3 4.5 Q3.2 0.3 7 0.3 Q10.8 0.3 13.7 4.5 Q10.8 8.7 7 8.7 Q3.2 8.7 0.3 4.5Z" fill="#e4e4e4"/><circle cx="7" cy="4.3" r="2.7" fill="#535353"/><circle cx="7" cy="4.3" r="1.5" fill="#e4e4e4"/><circle cx="7.7" cy="3.7" r="0.7" fill="#535353"/></svg>
  <span class="t" style="left:1120px;top:688px;font-size:10.5px;color:#ececec;transform:scaleX(0.932)">Gradient Overlay</span>
  <!-- scrollbar -->
  <div style="left:1350px;top:588px;width:16px;height:114px;background:#4d4d4d"></div>
  <div style="left:1352px;top:605px;width:12px;height:46px;background:#686868"></div>
  <svg style="left:1353px;top:595px" width="9" height="6" viewBox="0 0 9 6"><path d="M1 5 L4.5 1.5 L8 5" fill="none" stroke="#8a8a8a" stroke-width="1"/></svg>
  <svg style="left:1353px;top:689px" width="9" height="6" viewBox="0 0 9 6"><path d="M1 1 L4.5 4.5 L8 1" fill="none" stroke="#8a8a8a" stroke-width="1"/></svg>
  <!-- bottom bar -->
  <div style="left:1034px;top:702px;width:332px;height:1px;background:#464646"></div>
  <svg style="left:1161.5px;top:711px" width="15" height="7.5" viewBox="0 0 16 8"><path d="M6.5 1 H4.2 Q1 1 1 4 Q1 7 4.2 7 H6.5 M9.5 1 H11.8 Q15 1 15 4 Q15 7 11.8 7 H9.5 M4.5 4 H11.5" fill="none" stroke="#a2a2a2" stroke-width="1.5"/></svg>
  <span class="t" style="left:1190px;top:706px;font-size:14.5px;font-style:italic;color:#a2a2a2;letter-spacing:-0.6px">fx</span>
  <svg style="left:1216px;top:709.5px" width="13" height="9.5" viewBox="0 0 15 11"><rect x="0" y="0" width="15" height="11" fill="#a2a2a2"/><circle cx="7.5" cy="5.5" r="3" fill="#535353"/></svg>
  <svg style="left:1244.5px;top:709px" width="11" height="11" viewBox="0 0 12 12"><circle cx="6" cy="6" r="5.2" fill="none" stroke="#a2a2a2" stroke-width="1.5"/><path d="M9.7 2.3 A5.2 5.2 0 0 1 2.3 9.7Z" fill="#a2a2a2"/></svg>
  <svg style="left:1270.5px;top:709px" width="13" height="10" viewBox="0 0 14 11"><path d="M0 0.6 H5 L6.5 2.2 H14 V11 H0Z" fill="#a2a2a2"/></svg>
  <svg style="left:1298.5px;top:709.5px" width="11" height="11" viewBox="0 0 12 12"><path d="M1 1 H11 V11 H5 L1 7Z M1 7 H5 V11" fill="none" stroke="#a2a2a2" stroke-width="1.4"/></svg>
  <svg style="left:1325px;top:708.5px" width="11.5" height="12.5" viewBox="0 0 13 14"><path d="M0.5 2.6 H12.5 M4.5 2.4 V0.8 H8.5 V2.4 M2 3 V13.2 H11 V3 M4.8 5 V11.4 M6.5 5 V11.4 M8.2 5 V11.4" fill="none" stroke="#a2a2a2" stroke-width="1.3"/></svg>
  <div style="left:0;top:727px;width:1366px;height:2px;background:#0c0c0c"></div>
</div>

<!-- LAYER STYLE DIALOG -->
<div id="ls" style="left:0;top:0;width:0;height:0">
  <div style="left:1031px;top:80px;width:340px;height:478px;background:#535353;border:1px solid #7b8894;box-shadow:0 3px 12px 2px rgba(0,0,0,.35)"></div>
  <div style="left:1032px;top:81px;width:334px;height:30px;background:#fff"></div>
  <svg style="left:1344px;top:89px" width="13" height="13" viewBox="0 0 13 13"><path d="M1.2 1.2 L11 11 M11 1.2 L1.2 11" stroke="#111" stroke-width="1.1"/></svg>
  <!-- groups -->
  <div style="left:1000px;top:127px;width:211px;height:419px;border:1px solid #474747;clip-path:inset(0 0 0 32px)"></div>
  <div style="left:1000px;top:141px;width:201px;height:174px;border:1px solid #474747;clip-path:inset(0 0 0 32px)"></div>
  <!-- row 1 -->
  <div class="inp" style="left:1010px;top:153px;width:43px;height:18px;clip-path:inset(0 0 0 22px)"></div>
  <svg style="left:1042px;top:160px" width="9" height="6" viewBox="0 0 9 6"><path d="M1 1 L4.5 4.5 L8 1" fill="none" stroke="#cfcfcf" stroke-width="1"/></svg>
  <div class="cb" style="left:1061px;top:156px"></div>
  <span class="t" style="left:1077px;top:157px;font-size:10.5px;color:#e8e8e8;transform:scaleX(0.928)">Dither</span>
  <!-- row 2 -->
  <div style="left:1032px;top:179px;width:11px;height:2px;background:#7e7e7e"></div>
  <svg style="left:1037px;top:181px" width="13" height="11" viewBox="0 0 13 11"><path d="M6.5 0.5 Q7.2 0.5 8 1.6 L11.6 6.6 Q12.2 7.6 12.2 8.4 Q12.2 10.2 10.4 10.2 H2.6 Q0.8 10.2 0.8 8.4 Q0.8 7.6 1.4 6.6 L5 1.6 Q5.8 0.5 6.5 0.5Z" fill="#f2f2f2"/></svg>
  <div class="inp" style="left:1059px;top:176px;width:42px;height:17px"></div>
  <span class="t" style="left:1063px;top:179px;font-size:10.5px;color:#f0f0f0;transform:scaleX(0.833)">100</span>
  <span class="t" style="left:1104px;top:179px;font-size:10.5px;color:#dcdcdc;transform:scaleX(0.963)">%</span>
  <!-- row 3 -->
  <div class="inp" style="left:1010px;top:198px;width:43px;height:23px;clip-path:inset(0 0 0 22px)"></div>
  <div style="left:1032px;top:199px;width:7px;height:21px;background:#0f6a26"></div>
  <div style="left:1039px;top:199px;width:1px;height:21px;background:#3a3a3a"></div>
  <svg style="left:1042px;top:207px" width="9" height="6" viewBox="0 0 9 6"><path d="M1 1 L4.5 4.5 L8 1" fill="none" stroke="#cfcfcf" stroke-width="1"/></svg>
  <div class="cb" style="left:1061px;top:203px"></div>
  <span class="t" style="left:1077px;top:204px;font-size:10.5px;color:#e8e8e8;transform:scaleX(0.908)">Reverse</span>
  <!-- row 4 -->
  <div class="inp" style="left:1010px;top:227px;width:43px;height:18px;clip-path:inset(0 0 0 22px)"></div>
  <svg style="left:1042px;top:233px" width="9" height="6" viewBox="0 0 9 6"><path d="M1 1 L4.5 4.5 L8 1" fill="none" stroke="#cfcfcf" stroke-width="1"/></svg>
  <div class="cb on" style="left:1061px;top:229px"></div>
  <svg style="left:1061px;top:229px" width="11" height="11" viewBox="0 0 11 11"><path d="M2.3 5.6 L4.6 7.9 L8.8 2.9" fill="none" stroke="#3a3a3a" stroke-width="1.7"/></svg>
  <span class="t" style="left:1077px;top:230px;font-size:10.5px;color:#e8e8e8;transform:scaleX(0.939)">Align with Layer</span>
  <!-- reset alignment -->
  <div class="inp" style="left:1042px;top:257px;width:100px;height:18px;text-align:center;line-height:16px;font-size:10.5px;color:#ececec"><span class="t c" style="transform:scaleX(0.932)">Reset Alignment</span></div>
  <!-- row scale -->
  <div style="left:1032px;top:292px;width:11px;height:2px;background:#6e6e6e"></div>
  <div class="inp" style="left:1059px;top:289px;width:42px;height:17px"></div>
  <span class="t" style="left:1063px;top:292px;font-size:10.5px;color:#f0f0f0;transform:scaleX(0.833)">100</span>
  <span class="t" style="left:1104px;top:292px;font-size:10.5px;color:#dcdcdc;transform:scaleX(0.963)">%</span>
  <!-- reset to default -->
  <div class="inp" style="left:1000px;top:320px;width:120px;height:18px;clip-path:inset(0 0 0 32px)"></div>
  <span class="t" style="left:1036px;top:324px;font-size:10.5px;color:#ececec;transform:scaleX(0.916)">Reset to Default</span>
  <!-- buttons -->
  <div class="btn" style="left:1226px;top:123px;width:130px;border-color:#e2e2e2"><span class="t c" style="transform:scaleX(0.886)">OK</span></div>
  <div class="btn" style="left:1226px;top:158px;width:130px"><span class="t c" style="transform:scaleX(0.933)">Cancel</span></div>
  <div class="btn" style="left:1226px;top:193px;width:130px"><span class="t c">New Style...</span></div>
  <div style="left:1254px;top:230px;width:13px;height:13px;background:#e9e9e9;border-radius:2px"></div>
  <svg style="left:1254px;top:230px" width="13" height="13" viewBox="0 0 12 12"><path d="M2.6 6.2 L5 8.6 L9.6 3.2" fill="none" stroke="#3a3a3a" stroke-width="1.8"/></svg>
  <span class="t" style="left:1274px;top:231px;font-size:12.5px;color:#e8e8e8;transform:scaleX(0.956)">Preview</span>
  <div style="left:1226px;top:256px;width:129px;height:128px;background:#2b2b2b"></div>
  <div style="left:1259px;top:288px;width:64px;height:60px;background:linear-gradient(to bottom,#0d6a24 0%,rgba(20,100,34,.92) 14%,rgba(90,60,32,.55) 48%,rgba(150,30,34,.3) 72%,rgba(200,10,36,0) 100%)"></div>
</div>

<!-- GRADIENT EDITOR -->
<div id="ge"></div>
<div id="gec" style="left:0;top:0;width:0;height:0">
  <div style="left:582px;top:81px;width:449px;height:30px;background:#fff"></div>
  <div style="left:582px;top:81px;width:7px;height:30px;background:linear-gradient(to right,#dcdcdc,#f4f4f4)"></div>
  <div style="left:589px;top:111px;width:1px;height:446px;background:#65707a"></div>
  <span class="t" style="left:598px;top:90px;font-size:12px;color:#000;transform:scaleX(0.973)">Gradient Editor</span>
  <div style="left:912px;top:96px;width:10px;height:1px;background:#b8c4d0"></div>
  <div style="left:957px;top:90px;width:10px;height:10px;border:1px solid #111"></div>
  <svg style="left:1002px;top:89px" width="13" height="13" viewBox="0 0 13 13"><path d="M1.2 1.2 L11 11 M11 1.2 L1.2 11" stroke="#111" stroke-width="1.1"/></svg>

  <!-- Presets group -->
  <div class="grp" style="left:601px;top:128px;width:334px;height:140px"></div>
  <div style="left:617px;top:121px;width:50px;height:14px;background:#535353"></div>
  <span class="t" style="left:622px;top:123px;font-size:12.5px;color:#e0e0e0;transform:scaleX(0.955)">Presets</span>
  <div style="left:897px;top:121px;width:24px;height:14px;background:#535353"></div>
  <svg style="left:901px;top:122px" width="18" height="13" viewBox="0 0 18 13"><g fill="#d8d8d8"><circle cx="6" cy="6" r="3.6"/><g stroke="#d8d8d8" stroke-width="2.2"><path d="M6 0.6V11.4M0.6 6H11.4M2.2 2.2L9.8 9.8M9.8 2.2L2.2 9.8"/></g><path d="M12.6 8.4h3.6l-1.8 2.2z"/></g><circle cx="6" cy="6" r="1.5" fill="#535353"/></svg>
  <div style="left:610px;top:143px;width:316px;height:115px;border:1px solid #454545;background:#4d4d4d"></div>
  <div style="left:908px;top:144px;width:17px;height:113px;background:#525252"></div>
  <div class="sw" style="left:612px;top:145px;background:linear-gradient(135deg,#fff 18%,#1a0808 78%)"></div>
  <div class="sw" style="left:644px;top:145px;background:linear-gradient(135deg,#fff 25%,rgba(255,255,255,0) 90%),repeating-conic-gradient(#fff 0 25%,#cfcfcf 0 50%) 0 0/8px 8px"></div>
  <div class="sw" style="left:676px;top:145px;background:linear-gradient(135deg,#000 22%,#fff 82%)"></div>
  <div class="sw" style="left:708px;top:145px;background:linear-gradient(135deg,#e8001c 22%,#0b6a22 80%)"></div>
  <div class="sw" style="left:740px;top:145px;background:linear-gradient(135deg,#2a0a6e 18%,#ff7a00 85%)"></div>
  <div class="sw" style="left:772px;top:145px;background:linear-gradient(135deg,#0a10b8 14%,#f01010 50%,#fff000 84%)"></div>
  <div class="sw" style="left:804px;top:145px;background:linear-gradient(135deg,#0a10b0 18%,#f6e800 50%,#0a10b0 82%)"></div>
  <div class="sw" style="left:836px;top:145px;background:linear-gradient(135deg,#ff6a00 15%,#fff200 50%,#ff6a00 88%)"></div>
  <div class="sw" style="left:868px;top:145px;background:linear-gradient(135deg,#7a0a8a 15%,#0a6a22 50%,#ff7a00 88%)"></div>
  <div class="sw" style="left:612px;top:177px;background:linear-gradient(135deg,#ffe800 14%,#7a1a8a 38%,#ff7a00 62%,#0a2a9a 86%)"></div>
  <div class="sw" style="left:644px;top:177px;background:linear-gradient(135deg,#8a4a20 12%,#f4c8a8 36%,#6a2a0a 62%,#f8d8c0 88%)"></div>
  <div class="sw" style="left:676px;top:177px;background:linear-gradient(135deg,#2a80d0 10%,#fff 49%,#8a5a00 50%,#e0a818 62%,#fff 90%)"></div>
  <div class="sw" style="left:708px;top:177px;background:linear-gradient(135deg,#f00 12%,#f0f 26%,#00f 40%,#0ff 54%,#0f0 66%,#ff0 80%,#f00 92%)"></div>
  <div class="sw" style="left:740px;top:177px;background:linear-gradient(135deg,rgba(255,0,0,0) 18%,#f00 30%,#ff0 42%,#0f0 50%,#0ff 58%,#00f 66%,#f0f 74%,rgba(255,0,255,0) 86%),repeating-conic-gradient(#fff 0 25%,#cfcfcf 0 50%) 0 0/8px 8px"></div>
  <div class="sw" style="left:772px;top:177px;background:repeating-linear-gradient(135deg,#fff 0 4.4px,rgba(255,255,255,0) 4.4px 6.4px),repeating-conic-gradient(#fff 0 25%,#cfcfcf 0 50%) 0 0/8px 8px"></div>
  <div class="sw" style="left:804px;top:177px;background:linear-gradient(135deg,#6e6e6e 10%,rgba(120,120,120,0) 90%),repeating-conic-gradient(#fff 0 25%,#cfcfcf 0 50%) 0 0/8px 8px"></div>

  <!-- buttons -->
  <div class="btn" style="left:943px;top:127px;width:78px;border-color:#e2e2e2"><span class="t c" style="transform:scaleX(0.886)">OK</span></div>
  <div class="btn" style="left:943px;top:162px;width:78px"><span class="t c" style="transform:scaleX(0.933)">Cancel</span></div>
  <div class="btn" style="left:943px;top:197px;width:78px"><span class="t c" style="transform:scaleX(1.020)">Load...</span></div>
  <div class="btn" style="left:943px;top:232px;width:78px"><span class="t c">Save...</span></div>
  <div class="btn" style="left:943px;top:277px;width:78px"><span class="t c" style="transform:scaleX(0.939)">New</span></div>

  <!-- name -->
  <span class="t" style="left:602px;top:285px;font-size:12.5px;color:#dedede">Name:</span>
  <div class="inp" style="left:649px;top:281px;width:223px;height:19px"></div>
  <span class="t" style="left:653px;top:285px;font-size:12.5px;color:#ececec;transform:scaleX(0.963)">Custom</span>

  <!-- gradient type group -->
  <div class="grp" style="left:601px;top:320px;width:418px;height:215px"></div>
  <div style="left:626px;top:314px;width:160px;height:14px;background:#535353"></div>
  <span class="t" style="left:632px;top:317px;font-size:12.5px;color:#e0e0e0">Gradient Type:</span>
  <div class="inp" style="left:720px;top:312px;width:62px;height:21px"></div>
  <span class="t" style="left:728px;top:317px;font-size:12.5px;color:#ececec;transform:scaleX(0.935)">Solid</span>
  <svg style="left:768px;top:320px" width="9" height="6" viewBox="0 0 9 6"><path d="M1 1 L4.5 4.5 L8 1" fill="none" stroke="#d0d0d0" stroke-width="1.1"/></svg>

  <span class="t" style="left:612px;top:348px;font-size:12.5px;color:#e0e0e0">Smoothness:</span>
  <div class="inp" style="left:690px;top:343px;width:51px;height:21px"></div>
  <div style="left:724px;top:344px;width:1px;height:19px;background:#6a6a6a"></div>
  <span class="t" style="left:695px;top:348px;font-size:12.5px;color:#ececec;transform:scaleX(0.959)">100</span>
  <svg style="left:728px;top:351px" width="9" height="6" viewBox="0 0 9 6"><path d="M1 1 L4.5 4.5 L8 1" fill="none" stroke="#d0d0d0" stroke-width="1.1"/></svg>
  <span class="t" style="left:747px;top:348px;font-size:12.5px;color:#e0e0e0">%</span>

  <!-- gradient bar -->
  <div style="left:616px;top:390px;width:389px;height:25px;background:linear-gradient(to right,rgba(228,0,40,0) 0%,rgba(200,30,45,.06) 20%,rgba(170,45,45,.17) 40%,rgba(115,68,55,.31) 55%,rgba(80,78,50,.46) 68%,rgba(45,92,42,.65) 80%,rgba(22,100,36,.85) 90%,#0b6a22 100%),repeating-conic-gradient(#fff 0 25%,#cbcbcb 0 50%) 0 0/8px 8px"></div>
  <!-- opacity stops -->
  <div style="left:613px;top:372px;width:10px;height:10px;background:#fff;border:1px solid #fff"></div>
  <svg style="left:612px;top:382px" width="12" height="7" viewBox="0 0 12 7"><path d="M1 0 H11 L6 6 Z" fill="#000"/></svg>
  <div style="left:998px;top:372px;width:10px;height:10px;background:#000;border:1px solid #fff;box-shadow:inset 0 0 0 1px #000,inset 0 0 0 2px #3a3a3a"></div>
  <svg style="left:997px;top:382px" width="12" height="7" viewBox="0 0 12 7"><path d="M1 0 H11 L6 6 Z" fill="#fff"/></svg>
  <svg style="left:806px;top:381px" width="9" height="9" viewBox="0 0 9 9"><path d="M4.5 1 L8 4.5 L4.5 8 L1 4.5 Z" fill="#535353" stroke="#ffffff" stroke-width="1.1"/></svg>
  <!-- color stops -->
  <svg style="left:612px;top:415px" width="12" height="7" viewBox="0 0 12 7"><path d="M1 7 H11 L6 1 Z" fill="#fff"/></svg>
  <div style="left:613px;top:421px;width:10px;height:11px;background:#e0002a;border:1px solid #fff;box-shadow:inset 0 0 0 1px #b4b4b4"></div>
  <svg style="left:997px;top:415px" width="12" height="7" viewBox="0 0 12 7"><path d="M1 7 H11 L6 1 Z" fill="#fff"/></svg>
  <div style="left:998px;top:421px;width:10px;height:11px;background:#0b6a22;border:1px solid #fff;box-shadow:inset 0 0 0 1px #b4b4b4"></div>

  <!-- stops group -->
  <div class="grp" style="left:611px;top:448px;width:400px;height:78px"></div>
  <div style="left:628px;top:441px;width:40px;height:14px;background:#535353"></div>
  <span class="t" style="left:633px;top:443px;font-size:12.5px;color:#e0e0e0;transform:scaleX(0.938)">Stops</span>
  <span class="t" style="left:639px;top:469px;font-size:12.5px;color:#e0e0e0">Opacity:</span>
  <div class="inp" style="left:690px;top:464px;width:51px;height:21px"></div>
  <div style="left:724px;top:465px;width:1px;height:19px;background:#6a6a6a"></div>
  <span class="t" style="left:695px;top:469px;font-size:12.5px;color:#ececec">0</span>
  <svg style="left:728px;top:472px" width="9" height="6" viewBox="0 0 9 6"><path d="M1 1 L4.5 4.5 L8 1" fill="none" stroke="#d0d0d0" stroke-width="1.1"/></svg>
  <span class="t" style="left:747px;top:469px;font-size:12.5px;color:#e0e0e0">%</span>
  <span class="t" style="left:800px;top:469px;font-size:12.5px;color:#e0e0e0;transform:scaleX(0.986)">Location:</span>
  <div class="inp" style="left:855px;top:464px;width:44px;height:21px"></div>
  <span class="t" style="left:860px;top:469px;font-size:12.5px;color:#ececec">0</span>
  <span class="t" style="left:905px;top:469px;font-size:12.5px;color:#e0e0e0">%</span>
  <div class="inp" style="left:932px;top:464px;width:69px;height:21px;text-align:center;line-height:21px;font-size:12.5px;color:#ececec"><span class="t c" style="transform:scaleX(0.955)">Delete</span></div>

  <span class="t" style="left:652px;top:499px;font-size:12.5px;color:#8c8c8c;transform:scaleX(0.942)">Color:</span>
  <div style="left:686px;top:494px;width:44px;height:22px;border:1px solid #3e3e3e;background:#565656"></div>
  <svg style="left:734px;top:503px" width="8" height="5" viewBox="0 0 8 5"><path d="M1 1 L4 4 L7 1" fill="none" stroke="#626262" stroke-width="1"/></svg>
  <span class="t" style="left:800px;top:499px;font-size:12.5px;color:#8c8c8c;transform:scaleX(0.986)">Location:</span>
  <div style="left:855px;top:495px;width:44px;height:21px;border:1px solid #5e5e5e;border-radius:2px;background:#535353"></div>
  <span class="t" style="left:905px;top:499px;font-size:12.5px;color:#8c8c8c">%</span>
  <div style="left:932px;top:495px;width:69px;height:21px;border:1px solid #5e5e5e;border-radius:2px;background:#535353;text-align:center;line-height:21px;font-size:12.5px;color:#8c8c8c"><span class="t c" style="transform:scaleX(0.955)">Delete</span></div>
</div>

</div>
</body>
</html>
